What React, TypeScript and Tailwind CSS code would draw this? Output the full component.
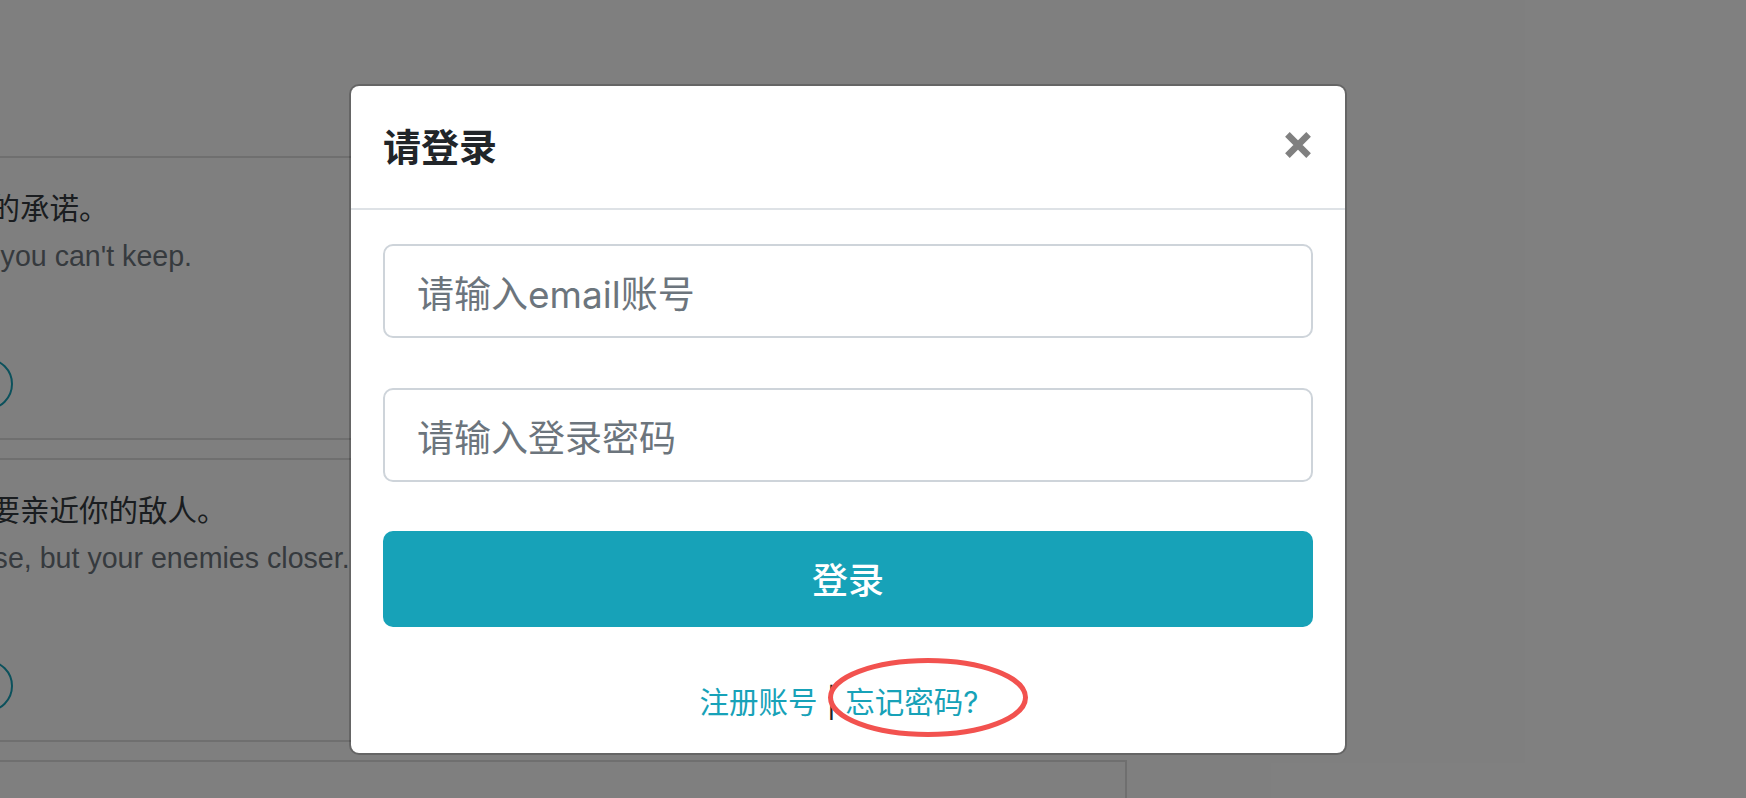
import React from 'react';

const quotes = [
  { cn: '不要许下你无法遵守的承诺。', en: "Don't make promises you can't keep." },
  { cn: '亲近你的朋友，但更要亲近你的敌人。', en: 'Keep your friends close, but your enemies closer.' },
  { cn: '知识就是力量。', en: 'Knowledge is power.' },
];

function QuoteItem({ cn, en }: { cn: string; en: string }) {
  return (
    <div className="border-2 border-black/[0.125] px-[28px] pt-[30px] pb-[28px]">
      <p className="whitespace-nowrap text-[29.5px] leading-[40px] text-[#343a40]">{cn}</p>
      <p className="mt-2 whitespace-nowrap font-['Liberation_Sans',sans-serif] text-[28.6px] leading-[40px] text-[#6c757d]">
        {en}
      </p>
      <div className="mt-[82px] flex gap-[7px]">
        {[0, 1, 2, 3, 4].map((i) => (
          <span key={i} className="h-[52px] w-[52px] rounded-full border-2 border-[#17a2b8]" />
        ))}
      </div>
    </div>
  );
}

function LoginModal() {
  return (
    <div className="absolute left-[349px] top-[84px] w-[998px] rounded-[10px] border-2 border-black/20 bg-white bg-clip-padding">
      {/* Header */}
      <div className="flex h-[124px] items-center justify-between border-b-2 border-[#dee2e6] pl-[32px] pr-[34px]">
        <h5 className="text-[38px] font-semibold text-[#212529]">请登录</h5>
        <button type="button" className="mb-[4px]" aria-label="Close">
          <svg width="26" height="26" viewBox="0 0 26 26">
            <path d="M2.4 2.4 L23.6 23.6 M23.6 2.4 L2.4 23.6" stroke="#808080" strokeWidth="6.5" />
          </svg>
        </button>
      </div>

      {/* Body */}
      <div className="px-[32px] pt-[34px] pb-[29px]">
        <input
          type="email"
          placeholder="请输入email账号"
          className="block h-[94px] w-full rounded-[10px] border-2 border-[#ced4da] px-[32px] pt-[7px] text-[37px] text-[#495057] outline-none placeholder:text-[#6c757d]"
        />
        <input
          type="password"
          placeholder="请输入登录密码"
          className="mt-[50px] block h-[94px] w-full rounded-[10px] border-2 border-[#ced4da] px-[32px] pt-[7px] text-[37px] text-[#495057] outline-none placeholder:text-[#6c757d]"
        />
        <button
          type="button"
          className="mt-[49px] block h-[96px] w-full rounded-[10px] bg-[#17a2b8] pt-[4px] text-[36px] font-medium text-white"
        >
          登录
        </button>
        <div className="mt-[53px] flex h-[44px] items-center justify-center pr-[18px] text-[29.5px] leading-[44px]">
          <a className="text-[#17a2b8]">注册账号</a>
          <span className="mx-[9px] text-[#212529]">|</span>
          <a className="text-[#17a2b8]">忘记密码?</a>
        </div>
      </div>
    </div>
  );
}

export default function App() {
  return (
    <div className="relative h-[798px] w-[1746px] overflow-hidden bg-white font-[Inter,'Noto_Sans_CJK_SC',sans-serif]">
      {/* page behind the dialog */}
      <div className="ml-[-305px] flex w-[1432px] flex-col gap-[18px] pt-[156px]">
        {quotes.map((q) => (
          <QuoteItem key={q.en} cn={q.cn} en={q.en} />
        ))}
      </div>

      {/* backdrop */}
      <div className="absolute inset-0 bg-black/50" />

      <LoginModal />

      {/* annotation */}
      <svg className="absolute left-[825px] top-[655px]" width="206" height="86" viewBox="0 0 206 86">
        <ellipse cx="103" cy="42.5" rx="97.5" ry="37" fill="none" stroke="#f2524f" strokeWidth="5" />
      </svg>
    </div>
  );
}
